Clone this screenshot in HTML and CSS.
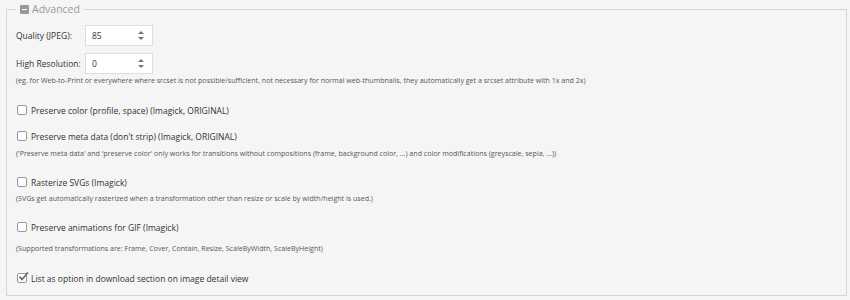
FILE: index.html
```html
<!DOCTYPE html>
<html lang="en">
<head>
<meta charset="utf-8">
<title>Advanced</title>
<link rel="stylesheet" href="styles.css">
</head>
<body>
<fieldset class="panel">
  <legend class="panel-legend">
    <span class="toggle-icon"><span class="toggle-bar"></span></span>
    <span class="legend-text">Advanced</span>
  </legend>

  <div class="field-row first">
    <label class="field-label">Quality (JPEG):</label>
    <div class="number-input">
      <span class="number-value">85</span>
      <span class="spinner"><span class="arrow-up"></span><span class="arrow-down"></span></span>
    </div>
  </div>

  <div class="field-row second">
    <label class="field-label">High Resolution:</label>
    <div class="number-input">
      <span class="number-value">0</span>
      <span class="spinner"><span class="arrow-up"></span><span class="arrow-down"></span></span>
    </div>
  </div>
  <p class="help help-1">(eg. for Web-to-Print or everywhere where srcset is not possible/sufficient, not necessary for normal web-thumbnails, they automatically get a srcset attribute with 1x and 2x)</p>

  <div class="check-row c1"><span class="checkbox"></span><span class="check-label">Preserve color (profile, space) (Imagick, ORIGINAL)</span></div>

  <div class="check-row c2"><span class="checkbox"></span><span class="check-label">Preserve meta data (don't strip) (Imagick, ORIGINAL)</span></div>
  <p class="help help-2">('Preserve meta data' and 'preserve color' only works for transitions without compositions (frame, background color, ...) and color modifications (greyscale, sepia, ...))</p>

  <div class="check-row c3"><span class="checkbox"></span><span class="check-label">Rasterize SVGs (Imagick)</span></div>
  <p class="help help-3">(SVGs get automatically rasterized when a transformation other than resize or scale by width/height is used.)</p>

  <div class="check-row c4"><span class="checkbox"></span><span class="check-label">Preserve animations for GIF (Imagick)</span></div>
  <p class="help help-4">(Supported transformations are: Frame, Cover, Contain, Resize, ScaleByWidth, ScaleByHeight)</p>

  <div class="check-row c5"><span class="checkbox checked"><svg class="tick" viewBox="0 0 12 12" width="12" height="12"><path d="M2.5 5.5 L5 8.5 L11 1.5" fill="none" stroke="#666" stroke-width="1.6"/></svg></span><span class="check-label">List as option in download section on image detail view</span></div>
</fieldset>
</body>
</html>
```

FILE: styles.css
```css
html, body {
  margin: 0;
  padding: 0;
  background: #f5f5f5;
}
body {
  font-family: "Open Sans", "Liberation Sans", sans-serif;
  color: #333;
  width: 850px;
  height: 300px;
  overflow: hidden;
}
.panel {
  box-sizing: border-box;
  margin: 0 0 0 6px;
  width: 841px;
  border: 1px solid #d6d6d6;
  padding: 0 9px 10px 9px;
  background: #f5f5f5;
}
.panel-legend {
  padding: 0 4px;
  margin-left: 0;
  display: flex;
  align-items: center;
  height: 18px;
  line-height: 18px;
}
.toggle-icon {
  width: 9px;
  height: 9px;
  background: #999;
  border-radius: 1px;
  display: flex;
  align-items: center;
  justify-content: center;
  margin-right: 3px;
}
.toggle-bar {
  width: 5px;
  height: 1px;
  background: #fff;
}
.legend-text {
  font-size: 10.5px;
  color: #999;
}
.field-row {
  display: flex;
  align-items: center;
  height: 21px;
  margin-top: 7px;
}
.field-label {
  width: 69px;
  font-size: 8.5px;
  color: #333;
}
.number-input {
  box-sizing: border-box;
  width: 68px;
  height: 21px;
  background: #fff;
  border: 1px solid #ddd;
  display: flex;
  align-items: center;
  justify-content: space-between;
  padding: 0 8px 0 6px;
  font-size: 8.5px;
  color: #333;
}
.spinner {
  display: flex;
  flex-direction: column;
  align-items: center;
  gap: 3px;
}
.arrow-up, .arrow-down {
  width: 0;
  height: 0;
  border-left: 3px solid transparent;
  border-right: 3px solid transparent;
}
.arrow-up { border-bottom: 3px solid #777; }
.arrow-down { border-top: 3px solid #777; }
.help {
  margin: 0;
  font-size: 7.08px;
  line-height: 12px;
  color: #555;
  white-space: nowrap;
}
.check-row {
  display: flex;
  align-items: center;
  height: 14px;
  padding-left: 1px;
}
.checkbox {
  box-sizing: border-box;
  width: 10px;
  height: 10px;
  border: 1px solid #999;
  border-radius: 2px;
  background: #fff;
  margin-right: 4px;
  position: relative;
}
.tick {
  position: absolute;
  left: -1px;
  top: -3px;
}
.check-label {
  font-size: 8.5px;
  color: #333;
}
.c1 { margin-top: 17px; }
.c2 { margin-top: 12px; }
.help-2 { margin-top: 4px; }
.c3 { margin-top: 16px; }
.help-3 { margin-top: 3px; }
.c4 { margin-top: 16px; }
.help-4 { margin-top: 8px; }
.c5 { margin-top: 17px; }
```
